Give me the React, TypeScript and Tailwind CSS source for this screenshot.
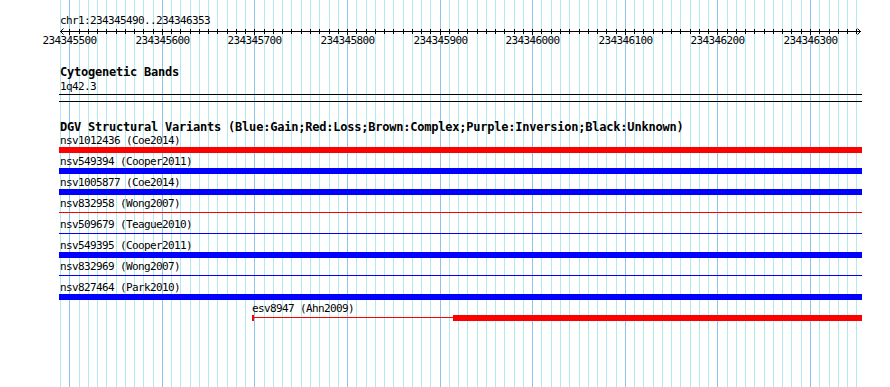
import React from "react";

const START = 234345490;
const SCALE = 800 / 864;
const xOf = (bp: number) => 60 + (bp - START) * SCALE;

const smallFont = "font-['DejaVu_Sans_Mono','Liberation_Mono',monospace] text-[11px] tracking-[-0.62px] leading-[13px]";
const boldFont = "font-['DejaVu_Sans_Mono','Liberation_Mono',monospace] font-bold text-[12px] tracking-[-0.22px] leading-[13px]";

function Grid() {
  const lines: React.ReactNode[] = [];
  for (let i = 0; i <= 86; i++) {
    const bp = START + i * 10;
    const x = Math.round(xOf(bp)) + 0.5;
    const major = bp % 100 === 0;
    lines.push(
      <line key={i} x1={x} x2={x} y1={0} y2={387} stroke={major ? "#8cc6ee" : "#b2eaf0"} strokeWidth={1} />
    );
  }
  return (
    <svg className="absolute inset-0" width={890} height={387} shapeRendering="crispEdges">
      {lines}
    </svg>
  );
}

function Ruler() {
  const ticks: React.ReactNode[] = [];
  const labels: React.ReactNode[] = [];
  for (let i = 1; i <= 86; i++) {
    const bp = START + i * 10;
    const x = Math.round(xOf(bp)) + 0.5;
    const major = bp % 100 === 0;
    ticks.push(<line key={i} x1={x} x2={x} y1={2} y2={major ? 8 : 7} stroke="#000" strokeWidth={1} />);
    if (major) {
      labels.push(
        <text
          key={"l" + i}
          x={x}
          y={16.5}
          textAnchor="middle"
          fontFamily="DejaVu Sans Mono, Liberation Mono, monospace"
          fontSize={11}
          letterSpacing={-0.62}
          fill="#000"
        >
          {bp}
        </text>
      );
    }
  }
  return (
    <svg width={890} height={20} className="block">
      <g shapeRendering="crispEdges">
        <line x1={60} x2={861} y1={4.5} y2={4.5} stroke="#000" strokeWidth={1} />
        {ticks}
      </g>
      <polyline points="63.5,1.5 60.5,4.5 63.5,7.5" fill="none" stroke="#000" strokeWidth={1} />
      <polyline points="857.5,1.5 860.5,4.5 857.5,7.5" fill="none" stroke="#000" strokeWidth={1} />
      {labels}
    </svg>
  );
}

type Row = { label: string; color: string; thick: boolean };

const rows: Row[] = [
  { label: "nsv1012436 (Coe2014)", color: "#ff0000", thick: true },
  { label: "nsv549394 (Cooper2011)", color: "#0000ff", thick: true },
  { label: "nsv1005877 (Coe2014)", color: "#0000ff", thick: true },
  { label: "nsv832958 (Wong2007)", color: "#ff0000", thick: false },
  { label: "nsv509679 (Teague2010)", color: "#0000ff", thick: false },
  { label: "nsv549395 (Cooper2011)", color: "#0000ff", thick: true },
  { label: "nsv832969 (Wong2007)", color: "#0000ff", thick: false },
  { label: "nsv827464 (Park2010)", color: "#0000ff", thick: true },
];

function FeatureRow({ row }: { row: Row }) {
  return (
    <div className="h-[21px] flex flex-col">
      <div className={`${smallFont} h-[13px] ml-[60px] text-black whitespace-nowrap`}>{row.label}</div>
      <div className="h-[6px] ml-[59px] w-[803px] flex flex-col">
        {row.thick ? (
          <div className="h-[6px]" style={{ backgroundColor: row.color }} />
        ) : (
          <div className="h-[1px] mt-[2px]" style={{ backgroundColor: row.color }} />
        )}
      </div>
    </div>
  );
}

function EsvRow() {
  return (
    <div className="h-[21px] flex flex-col">
      <div className={`${smallFont} h-[13px] ml-[252px] text-black whitespace-nowrap`}>esv8947 (Ahn2009)</div>
      <div className="h-[6px] ml-[252px] w-[610px] flex flex-row">
        <div className="w-[2px] h-[6px] bg-[#ff0000]" />
        <div className="w-[199px] h-[1px] mt-[2px] bg-[#ff0000]" />
        <div className="flex-1 h-[6px] bg-[#ff0000]" />
      </div>
    </div>
  );
}

export default function App() {
  return (
    <div className="relative w-[890px] h-[387px] overflow-hidden bg-white text-black">
      <Grid />
      <div className="relative flex flex-col">
        <div className="h-[14px]" />
        <div className={`${smallFont} h-[13px] ml-[60px] whitespace-nowrap`}>chr1:234345490..234346353</div>
        <Ruler />
        <div className="h-[19px]" />
        <div className={`${boldFont} h-[13px] ml-[60px] whitespace-nowrap`}>Cytogenetic Bands</div>
        <div className="h-[1px]" />
        <div className={`${smallFont} h-[13px] ml-[60px] whitespace-nowrap`}>1q42.3</div>
        <div className="h-[1px]" />
        <div className="h-[1px] ml-[59px] w-[803px] bg-black" />
        <div className="h-[6px]" />
        <div className="h-[1px] ml-[59px] w-[803px] bg-black" />
        <div className="h-[19px]" />
        <div className={`${boldFont} h-[13px] ml-[60px] whitespace-nowrap`}>
          DGV Structural Variants (Blue:Gain;Red:Loss;Brown:Complex;Purple:Inversion;Black:Unknown)
        </div>
        {rows.map((r) => (
          <FeatureRow key={r.label} row={r} />
        ))}
        <EsvRow />
      </div>
    </div>
  );
}
